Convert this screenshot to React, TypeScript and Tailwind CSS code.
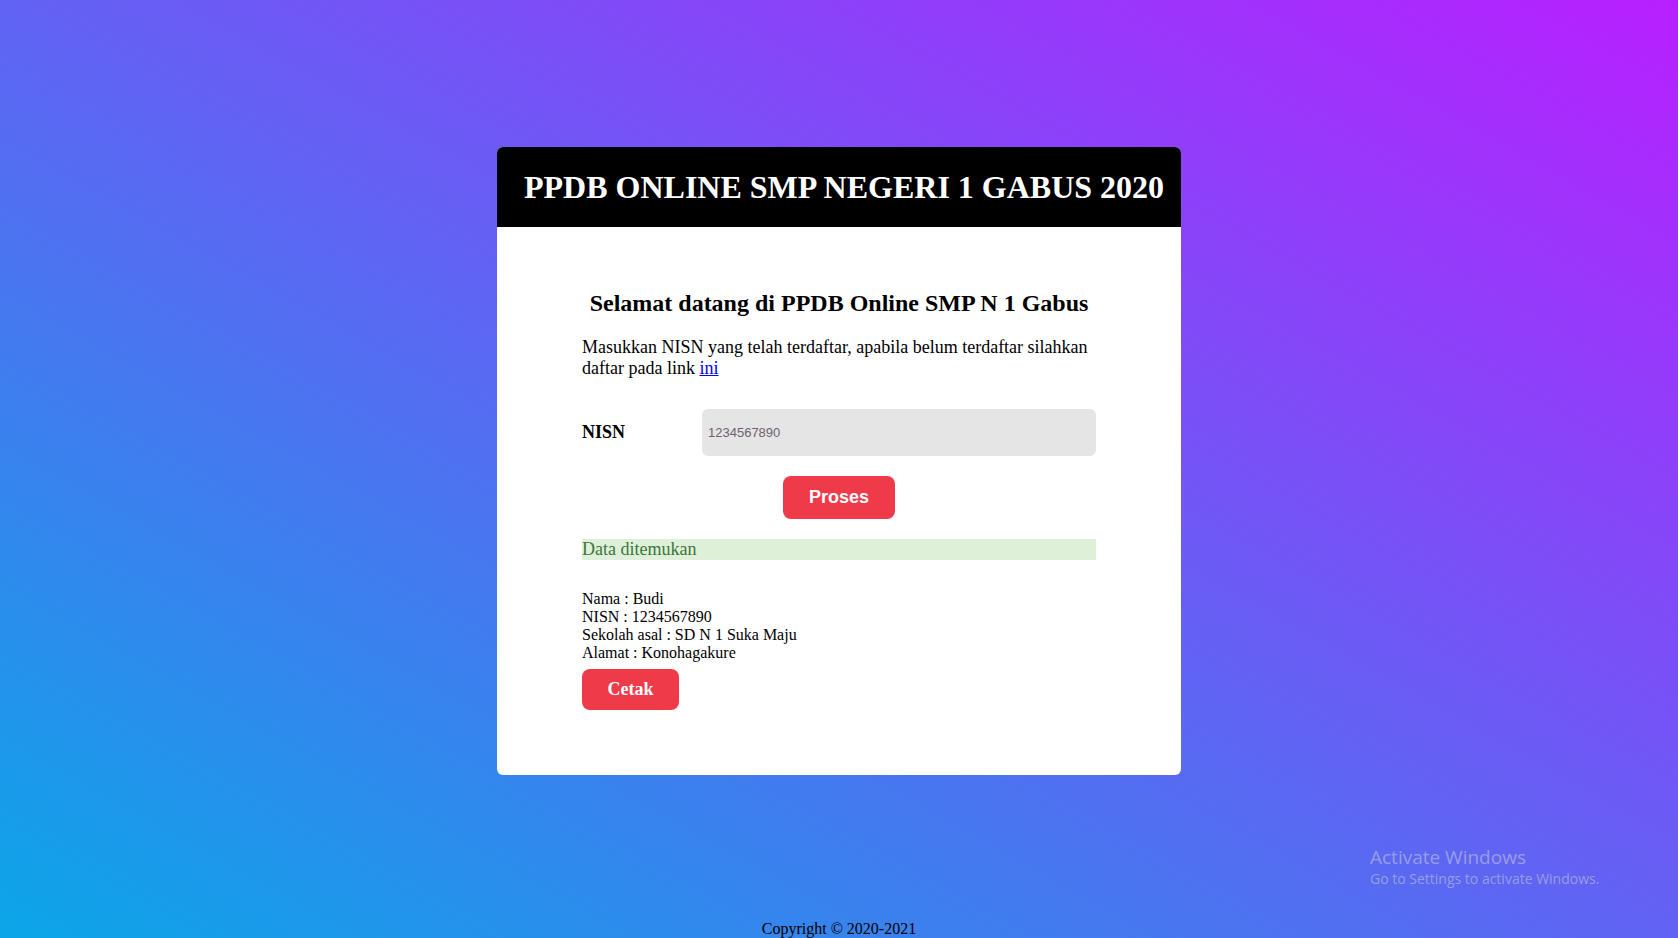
import React from 'react';

const App: React.FC = () => {
  return (
    <div
      className="relative flex h-[938px] flex-col items-center overflow-hidden bg-[linear-gradient(to_top_right,#0ba6e8,#b81fff)] text-black"
      style={{ fontFamily: '"Liberation Serif", "Times New Roman", serif' }}
    >
      {/* Card */}
      <div className="mt-[147px] w-[684px] overflow-hidden rounded-[6px] bg-white">
        <div className="flex h-[80px] items-center bg-black pl-[27px]">
          <h1 className="text-[32px] font-bold leading-[37px] text-white">PPDB ONLINE SMP NEGERI 1 GABUS 2020</h1>
        </div>

        <div className="px-[85px] pb-[65px]">
          <h2 className="mt-[62px] text-center text-[24px] font-bold leading-[28px]">
            Selamat datang di PPDB Online SMP N 1 Gabus
          </h2>
          <p className="mt-[20px] text-[18px] leading-[21px]">
            Masukkan NISN yang telah terdaftar, apabila belum terdaftar silahkan daftar pada link{' '}
            <a href="#" className="text-[#0000ee] underline">ini</a>
          </p>

          <div className="mt-[30px] flex items-center">
            <label className="w-[120px] text-[18px] font-bold leading-[21px]">NISN</label>
            <input
              type="text"
              placeholder="1234567890"
              className="h-[47px] w-[394px] rounded-[6px] bg-[#e5e5e5] px-[6px] text-[13px] outline-none placeholder:text-[#6f6170]"
              style={{ fontFamily: '"Liberation Sans", Arial, sans-serif' }}
            />
          </div>

          <div className="mt-[20px] flex justify-center">
            <button
              className="h-[43px] w-[112px] rounded-[8px] bg-[#ef3a4a] text-[18px] font-bold text-white"
              style={{ fontFamily: '"Liberation Sans", Arial, sans-serif' }}
            >
              Proses
            </button>
          </div>

          <div className="mt-[20px] h-[21px] bg-[#dff0d8] text-[18px] leading-[21px] text-[#3c763d]">Data ditemukan</div>

          <div className="mt-[30px] text-[16px] leading-[18px]">
            <div>Nama : Budi</div>
            <div>NISN : 1234567890</div>
            <div>Sekolah asal : SD N 1 Suka Maju</div>
            <div>Alamat : Konohagakure</div>
          </div>

          <button className="mt-[7px] h-[41px] w-[97px] rounded-[8px] bg-[#ef3a4a] text-[18px] font-bold text-white">
            Cetak
          </button>
        </div>
      </div>

      <footer className="mt-auto text-[16px] leading-[18px]">Copyright © 2020-2021</footer>

      {/* Windows watermark */}
      <div
        className="absolute left-[1370px] top-[845px] text-[rgba(205,205,215,0.55)]"
        style={{ fontFamily: '"Open Sans", "Noto Sans", sans-serif' }}
      >
        <div className="text-[19px] leading-[24px]">Activate Windows</div>
        <div className="text-[14px] leading-[20px]">Go to Settings to activate Windows.</div>
      </div>
    </div>
  );
};

export default App;
